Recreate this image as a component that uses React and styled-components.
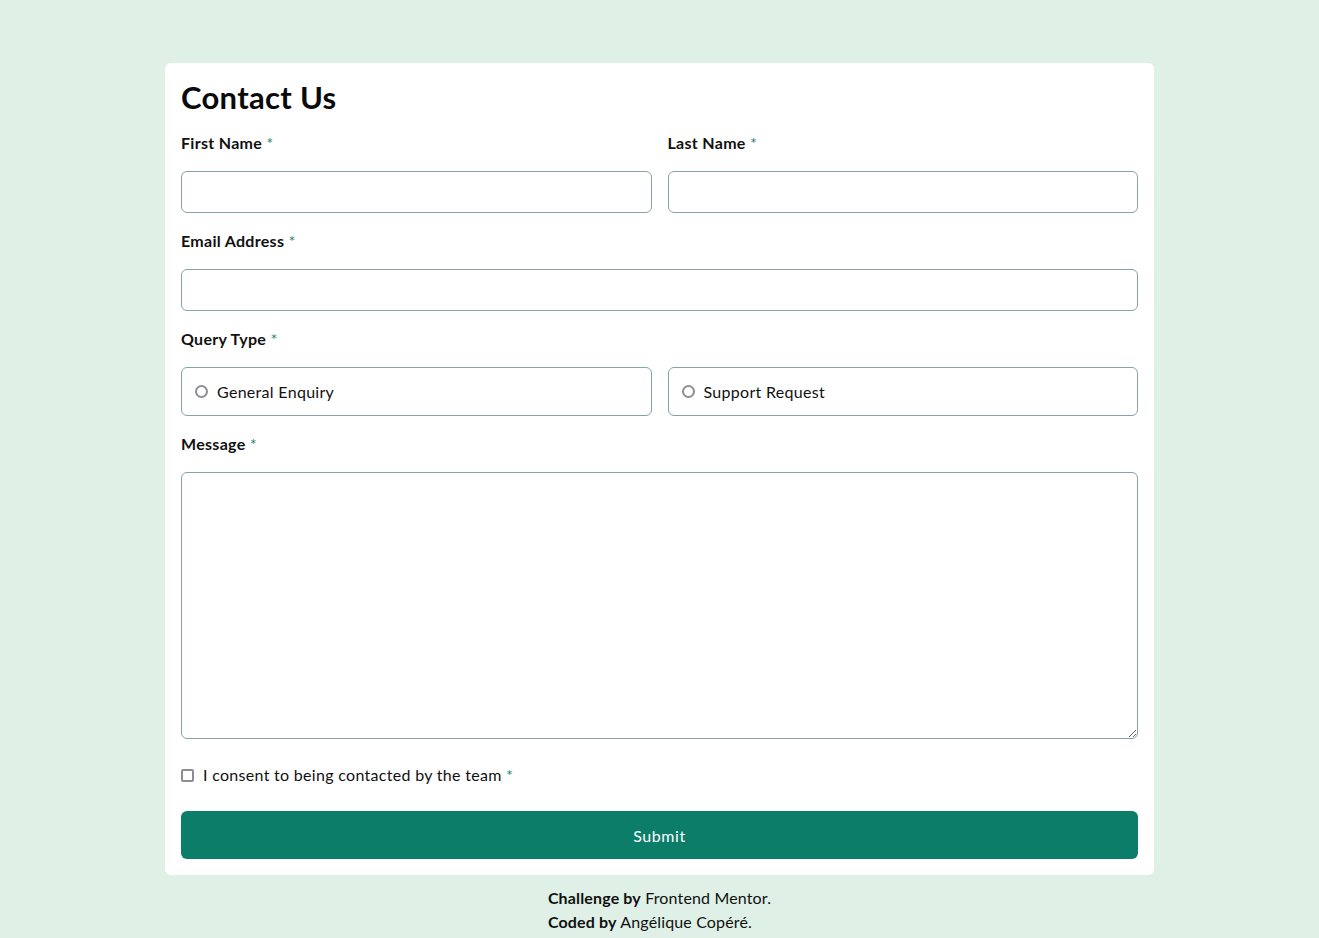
import React from "react";
import styled, { createGlobalStyle } from "styled-components";

const Global = createGlobalStyle`
  * { box-sizing: border-box; }
  body {
    margin: 0;
    background: #dff0e6;
    font-family: Lato, "Noto Sans", sans-serif;
    color: #111;
  }
`;

const Page = styled.main`
  padding-top: 63px;
  display: flex;
  flex-direction: column;
  align-items: center;
`;

const Card = styled.form`
  width: 989px;
  background: #fff;
  border-radius: 6px;
  padding: 16px;
  display: flex;
  flex-direction: column;
  gap: 19px;
`;

const Title = styled.h1`
  margin: 0;
  font-size: 31px;
  line-height: 36px;
  font-weight: 700;
  letter-spacing: 0.3px;
  color: #0a0a0a;
`;

const Row = styled.div`
  display: grid;
  grid-template-columns: 1fr 1fr;
  gap: 16px;
`;

const Field = styled.div`
  display: flex;
  flex-direction: column;
  gap: 19px;
`;

const Label = styled.label`
  font-size: 16px;
  line-height: 18px;
  font-weight: 700;
  letter-spacing: 0.3px;
  color: #111;
`;

const Star = styled.span`
  color: #0c7d69;
  font-family: "DejaVu Sans", sans-serif;
  font-size: 11px;
  font-weight: 400;
  vertical-align: 3px;
  margin-left: 5px;
`;

const Input = styled.input`
  height: 42px;
  width: 100%;
  border: 1px solid #87a3a6;
  border-radius: 6px;
  font: inherit;
  padding: 0 14px;
  background: #fff;
  outline: none;
`;

const RadioBox = styled.label`
  height: 49px;
  border: 1px solid #87a3a6;
  border-radius: 6px;
  display: flex;
  align-items: center;
  gap: 9px;
  padding-left: 13px;
  font-size: 16px;
  letter-spacing: 0.3px;
  color: #111;
`;

const RadioDot = styled.span`
  width: 13px;
  height: 13px;
  border-radius: 50%;
  border: 2px solid #8d8d99;
  flex: none;
`;

const TextArea = styled.textarea`
  height: 267px;
  width: 100%;
  border: 1px solid #87a3a6;
  border-radius: 6px;
  font: inherit;
  padding: 12px 14px;
  resize: vertical;
  outline: none;
`;

const Consent = styled.label`
  margin: 8px 0;
  display: flex;
  align-items: center;
  gap: 9px;
  font-size: 16px;
  line-height: 18px;
  letter-spacing: 0.3px;
  color: #111;
`;

const Box = styled.span`
  width: 13px;
  height: 13px;
  border: 2px solid #8d8d99;
  border-radius: 2px;
  flex: none;
`;

const Submit = styled.button`
  height: 48px;
  width: 100%;
  border: none;
  border-radius: 6px;
  background: #0c7d69;
  color: #fff;
  font: inherit;
  font-size: 16px;
  letter-spacing: 0.6px;
  cursor: pointer;
`;

const Footer = styled.footer`
  margin-top: 11px;
  font-size: 16px;
  line-height: 24px;
  letter-spacing: 0.15px;
  color: #111;
  text-align: left;
`;

export default function App() {
  return (
    <>
      <Global />
      <Page>
        <Card onSubmit={(e) => e.preventDefault()}>
          <Title>Contact Us</Title>
          <Row>
            <Field>
              <Label>First Name<Star>*</Star></Label>
              <Input type="text" />
            </Field>
            <Field>
              <Label>Last Name<Star>*</Star></Label>
              <Input type="text" />
            </Field>
          </Row>
          <Field>
            <Label>Email Address<Star>*</Star></Label>
            <Input type="email" />
          </Field>
          <Field>
            <Label>Query Type<Star>*</Star></Label>
            <Row>
              <RadioBox><RadioDot />General Enquiry</RadioBox>
              <RadioBox><RadioDot />Support Request</RadioBox>
            </Row>
          </Field>
          <Field>
            <Label>Message<Star>*</Star></Label>
            <TextArea />
          </Field>
          <Consent>
            <Box />
            <span>I consent to being contacted by the team<Star>*</Star></span>
          </Consent>
          <Submit type="submit">Submit</Submit>
        </Card>
        <Footer>
          <div><b>Challenge by</b> Frontend Mentor.</div>
          <div><b>Coded by</b> Angélique Copéré.</div>
        </Footer>
      </Page>
    </>
  );
}
